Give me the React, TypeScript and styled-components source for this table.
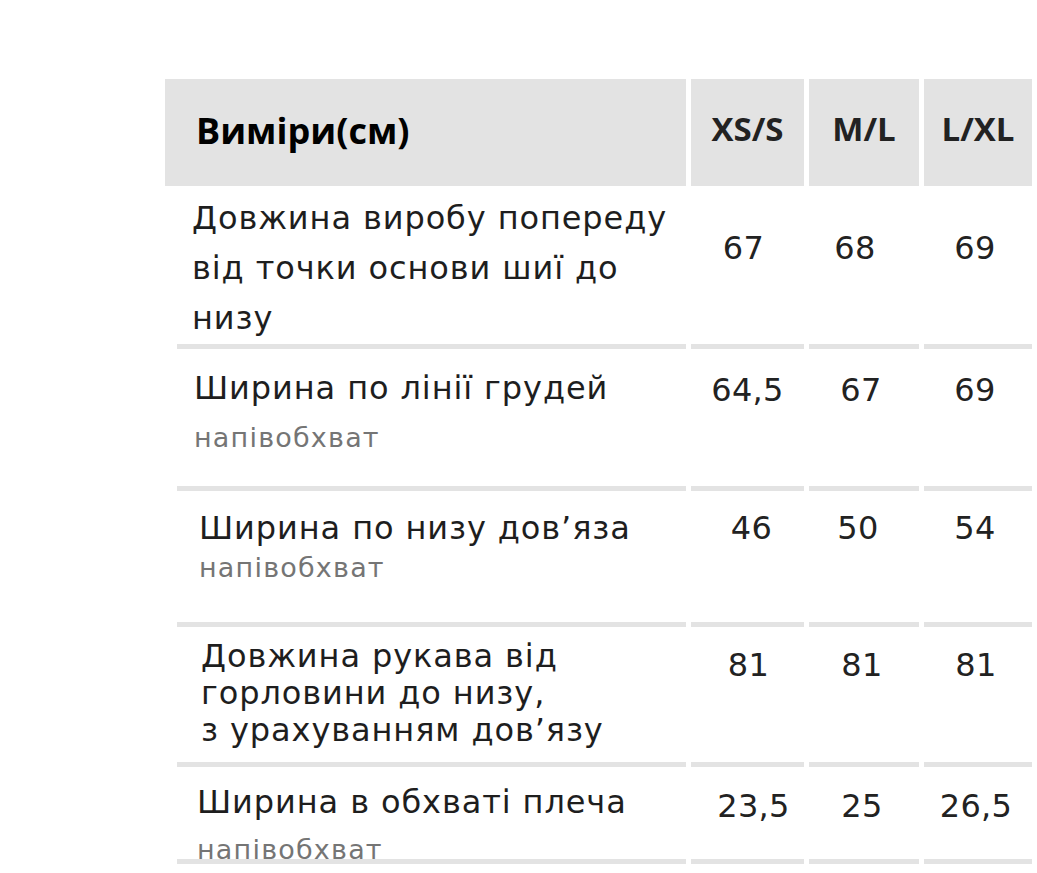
import React from "react";
import styled, { createGlobalStyle } from "styled-components";

const GlobalStyle = createGlobalStyle`
  html, body {
    margin: 0;
    padding: 0;
    background: #ffffff;
  }
`;

const GREY = "#e3e3e3";
const COLUMNS = "521px 113px 110px 108px";

const Page = styled.div`
  padding: 79px 0 0 165px;
  width: 1037px;
  height: 873px;
  box-sizing: border-box;
  overflow: hidden;
  font-family: "DejaVu Sans", "Noto Sans", sans-serif;
  color: #1e1e1e;
`;

const Table = styled.div`
  display: flex;
  flex-direction: column;
  width: 867px;
`;

const HeaderRow = styled.div`
  display: grid;
  grid-template-columns: ${COLUMNS};
  column-gap: 5px;
  height: 107px;
`;

const HeaderCell = styled.div<{ $first?: boolean }>`
  display: flex;
  align-items: center;
  justify-content: ${({ $first }) => ($first ? "flex-start" : "center")};
  padding: ${({ $first }) => ($first ? "0 0 4px 31px" : "0 0 8px")};
  background: ${GREY};
  font-family: "Open Sans", "Liberation Sans", sans-serif;
  font-weight: 700;
  font-size: ${({ $first }) => ($first ? "36px" : "33px")};
  color: ${({ $first }) => ($first ? "#000000" : "#222222")};
`;

const Row = styled.div<{ $height: number }>`
  display: grid;
  grid-template-columns: ${COLUMNS};
  grid-template-rows: ${({ $height }) => $height}px;
  column-gap: 5px;
`;

const LabelCell = styled.div<{ $top: number; $left: number }>`
  margin-left: 12px;
  padding: ${({ $top, $left }) => `${$top}px 0 0 ${$left}px`};
  border-bottom: 5px solid ${GREY};
  min-height: 0;
`;

const Title = styled.div<{ $lineHeight: number }>`
  font-size: 32px;
  letter-spacing: 0.9px;
  line-height: ${({ $lineHeight }) => $lineHeight}px;
  white-space: nowrap;
`;

const Note = styled.div<{ $gap: number }>`
  margin-top: ${({ $gap }) => $gap}px;
  font-size: 27px;
  letter-spacing: 1.2px;
  line-height: 30px;
  color: #757575;
`;

const ValueCell = styled.div<{ $top: number }>`
  display: flex;
  justify-content: center;
  padding-top: ${({ $top }) => $top}px;
  border-bottom: 5px solid ${GREY};
`;

const Value = styled.span<{ $dx: number }>`
  position: relative;
  left: ${({ $dx }) => $dx}px;
  font-size: 32px;
  letter-spacing: 0.3px;
  line-height: 40px;
  color: #222222;
`;

type RowData = {
  height: number;
  top: number;
  left: number;
  lineHeight: number;
  lines: string[];
  note?: string;
  noteGap?: number;
  valueTop: number;
  values: [string, number][];
};

const rows: RowData[] = [
  {
    height: 163,
    top: 7,
    left: 15,
    lineHeight: 50,
    lines: ["Довжина виробу попереду", "від точки основи шиї до", "низу"],
    valueTop: 42,
    values: [["67", -4], ["68", -9], ["69", -3]],
  },
  {
    height: 142,
    top: 19,
    left: 17,
    lineHeight: 40,
    lines: ["Ширина по лінії грудей"],
    note: "напівобхват",
    noteGap: 15,
    valueTop: 21,
    values: [["64,5", 0], ["67", -3], ["69", -3]],
  },
  {
    height: 136,
    top: 17,
    left: 22,
    lineHeight: 40,
    lines: ["Ширина по низу дов’яза"],
    note: "напівобхват",
    noteGap: 5,
    valueTop: 17,
    values: [["46", 4], ["50", -6], ["54", -3]],
  },
  {
    height: 140,
    top: 11,
    left: 24,
    lineHeight: 37,
    lines: ["Довжина рукава від", "горловини до низу,", "з урахуванням дов’язу"],
    valueTop: 18,
    values: [["81", 1], ["81", -2], ["81", -2]],
  },
  {
    height: 97,
    top: 15,
    left: 20,
    lineHeight: 40,
    lines: ["Ширина в обхваті плеча"],
    note: "напівобхват",
    noteGap: 13,
    valueTop: 19,
    values: [["23,5", 6], ["25", -2], ["26,5", -2]],
  },
];

const App: React.FC = () => {
  return (
    <Page>
      <GlobalStyle />
      <Table>
        <HeaderRow>
          <HeaderCell $first>Виміри(см)</HeaderCell>
          <HeaderCell>XS/S</HeaderCell>
          <HeaderCell>M/L</HeaderCell>
          <HeaderCell>L/XL</HeaderCell>
        </HeaderRow>
        {rows.map((row, i) => (
          <Row key={i} $height={row.height}>
            <LabelCell $top={row.top} $left={row.left}>
              {row.lines.map((line) => (
                <Title key={line} $lineHeight={row.lineHeight}>
                  {line}
                </Title>
              ))}
              {row.note && <Note $gap={row.noteGap ?? 0}>{row.note}</Note>}
            </LabelCell>
            {row.values.map(([value, dx], j) => (
              <ValueCell key={j} $top={row.valueTop}>
                <Value $dx={dx}>{value}</Value>
              </ValueCell>
            ))}
          </Row>
        ))}
      </Table>
    </Page>
  );
};

export default App;
